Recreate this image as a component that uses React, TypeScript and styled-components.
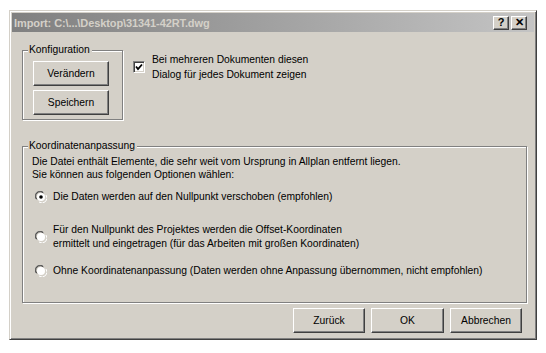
import React from "react";
import styled, { createGlobalStyle } from "styled-components";

const GlobalStyle = createGlobalStyle`
  html, body {
    margin: 0;
    padding: 0;
    background: #ffffff;
  }
  body {
    font-family: "Liberation Sans", Arial, sans-serif;
    font-size: 10.3px;
    color: #000;
  }
`;

const Window = styled.div`
  margin: 10px 0 0 9px;
  width: 528px;
  height: 330px;
  box-sizing: border-box;
  background: #d4d0c8;
  border-top: 1px solid #d4d0c8;
  border-left: 1px solid #d4d0c8;
  border-right: 1px solid #404040;
  border-bottom: 1px solid #404040;
  box-shadow: inset 1px 1px 0 #ffffff, inset -1px -1px 0 #808080;
  padding: 2px;
  display: flex;
  flex-direction: column;
`;

const TitleBar = styled.div`
  height: 19px;
  background: linear-gradient(to right, #808080 0%, #a8a8a8 60%, #c4c4c4 100%);
  display: flex;
  align-items: center;
  padding: 0 7px 0 2px;
`;

const Title = styled.div`
  flex: 1;
  font-weight: bold;
  font-size: 11px;
  color: #d4d0c8;
  letter-spacing: -0.1px;
`;

const CaptionButton = styled.div`
  width: 16px;
  height: 14px;
  box-sizing: border-box;
  margin-left: 2px;
  background: #d4d0c8;
  border-top: 1px solid #ffffff;
  border-left: 1px solid #ffffff;
  border-right: 1px solid #404040;
  border-bottom: 1px solid #404040;
  box-shadow: inset -1px -1px 0 #808080;
  display: flex;
  align-items: center;
  justify-content: center;
  font-weight: bold;
  font-size: 11px;
  line-height: 1;
`;

const Body = styled.div`
  flex: 1;
  display: flex;
  flex-direction: column;
  padding: 12px 8px 0 10px;
`;

const TopRow = styled.div`
  display: flex;
  align-items: flex-start;
`;

const GroupBox = styled.fieldset<{ $width: number; $height: number }>`
  margin: 0;
  width: ${(p) => p.$width}px;
  height: ${(p) => p.$height}px;
  box-sizing: border-box;
  border: 1px solid #808080;
  box-shadow: 1px 1px 0 #ffffff, inset 1px 1px 0 #ffffff;
  padding: 0;
  min-width: 0;
`;

const Legend = styled.legend`
  margin-left: 5px;
  padding: 0 2px 0 1px;
  font-size: 10.3px;
  line-height: 12px;
  background: #d4d0c8;
`;

const ConfigButtons = styled.div`
  display: flex;
  flex-direction: column;
  gap: 4px;
  padding: 5px 0 0 10px;
`;

const Button = styled.button<{ $width?: number }>`
  width: ${(p) => p.$width ?? 76}px;
  height: 25px;
  box-sizing: border-box;
  margin: 0;
  padding: 0;
  background: #d4d0c8;
  font-family: "Liberation Sans", Arial, sans-serif;
  font-size: 10.3px;
  color: #000;
  border-top: 1px solid #ffffff;
  border-left: 1px solid #ffffff;
  border-right: 1px solid #404040;
  border-bottom: 1px solid #404040;
  box-shadow: inset -1px -1px 0 #808080;
  border-radius: 0;
`;

const CheckOption = styled.div`
  display: flex;
  align-items: center;
  margin: 8px 0 0 10px;
`;

const CheckBox = styled.div`
  width: 12px;
  height: 12px;
  box-sizing: border-box;
  background: #ffffff;
  border-top: 1px solid #808080;
  border-left: 1px solid #808080;
  border-right: 1px solid #ffffff;
  border-bottom: 1px solid #ffffff;
  box-shadow: inset 1px 1px 0 #404040, inset -1px -1px 0 #d4d0c8;
  display: flex;
  align-items: center;
  justify-content: center;
`;

const OptionText = styled.div`
  margin-left: 7px;
  line-height: 15px;
`;

const CoordBox = styled.div`
  margin-top: 20px;
`;

const Intro = styled.div`
  line-height: 13px;
  padding: 3px 0 0 9px;
`;

const RadioList = styled.div`
  display: flex;
  flex-direction: column;
  padding: 9px 0 0 12px;
`;

const RadioRow = styled.div<{ $gap: number }>`
  display: flex;
  align-items: center;
  margin-bottom: ${(p) => p.$gap}px;
`;

const RadioLabel = styled.div`
  margin-left: 6px;
  line-height: 14px;
`;

const Footer = styled.div`
  display: flex;
  justify-content: flex-end;
  gap: 6px;
  padding: 5px 4px 0 0;
`;

const Radio = ({ checked }: { checked?: boolean }) => (
  <svg width="12" height="12" viewBox="0 0 12 12">
    <path d="M1 8 A5 5 0 0 1 8 1" fill="none" stroke="#808080" />
    <path d="M2 8.5 A4.2 4.2 0 0 1 8.5 2" fill="none" stroke="#404040" />
    <path d="M11 4 A5 5 0 0 1 4 11" fill="none" stroke="#ffffff" />
    <circle cx="6" cy="6" r="4" fill="#ffffff" />
    {checked && <circle cx="6" cy="6" r="1.8" fill="#000" />}
  </svg>
);

const Check = () => (
  <svg width="8" height="8" viewBox="0 0 8 8">
    <path d="M1 3.5 L3 6 L7 1.5" fill="none" stroke="#000" strokeWidth="1.8" />
  </svg>
);

export default function App() {
  return (
    <>
      <GlobalStyle />
      <Window>
        <TitleBar>
          <Title>Import: C:\...\Desktop\31341-42RT.dwg</Title>
          <CaptionButton>?</CaptionButton>
          <CaptionButton>✕</CaptionButton>
        </TitleBar>
        <Body>
          <TopRow>
            <GroupBox $width={101} $height={76}>
              <Legend>Konfiguration</Legend>
              <ConfigButtons>
                <Button>Verändern</Button>
                <Button>Speichern</Button>
              </ConfigButtons>
            </GroupBox>
            <CheckOption>
              <CheckBox>
                <Check />
              </CheckBox>
              <OptionText>
                Bei mehreren Dokumenten diesen
                <br />
                Dialog für jedes Dokument zeigen
              </OptionText>
            </CheckOption>
          </TopRow>
          <CoordBox>
            <GroupBox $width={505} $height={163}>
              <Legend>Koordinatenanpassung</Legend>
              <Intro>
                Die Datei enthält Elemente, die sehr weit vom Ursprung in Allplan entfernt liegen.
                <br />
                Sie können aus folgenden Optionen wählen:
              </Intro>
              <RadioList>
                <RadioRow $gap={19}>
                  <Radio checked />
                  <RadioLabel>Die Daten werden auf den Nullpunkt verschoben (empfohlen)</RadioLabel>
                </RadioRow>
                <RadioRow $gap={13}>
                  <Radio />
                  <RadioLabel>
                    Für den Nullpunkt des Projektes werden die Offset-Koordinaten
                    <br />
                    ermittelt und eingetragen (für das Arbeiten mit großen Koordinaten)
                  </RadioLabel>
                </RadioRow>
                <RadioRow $gap={0}>
                  <Radio />
                  <RadioLabel>
                    Ohne Koordinatenanpassung (Daten werden ohne Anpassung übernommen, nicht empfohlen)
                  </RadioLabel>
                </RadioRow>
              </RadioList>
            </GroupBox>
          </CoordBox>
          <Footer>
            <Button $width={72}>Zurück</Button>
            <Button $width={73}>OK</Button>
            <Button $width={72}>Abbrechen</Button>
          </Footer>
        </Body>
      </Window>
    </>
  );
}
